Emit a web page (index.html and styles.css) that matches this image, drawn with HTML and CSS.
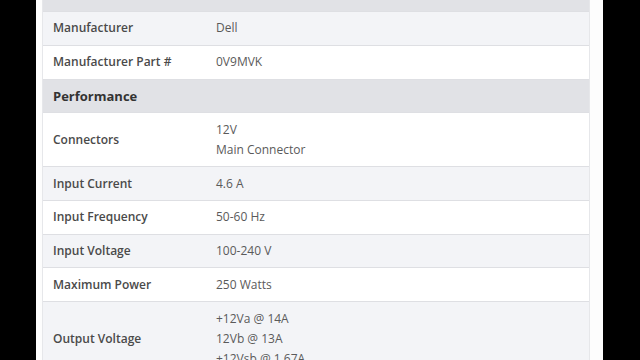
FILE: index.html
```html
<!DOCTYPE html>
<html>
<head>
<meta charset="utf-8">
<link rel="stylesheet" href="styles.css">
</head>
<body>
<div class="panel">
  <div class="specs">
    <div class="row section top"><div class="label">General</div></div>
    <div class="row alt"><div class="label">Manufacturer</div><div class="value">Dell</div></div>
    <div class="row"><div class="label">Manufacturer Part #</div><div class="value">0V9MVK</div></div>
    <div class="row section"><div class="label">Performance</div></div>
    <div class="row"><div class="label">Connectors</div><div class="value">12V<br>Main Connector</div></div>
    <div class="row alt"><div class="label">Input Current</div><div class="value">4.6 A</div></div>
    <div class="row"><div class="label">Input Frequency</div><div class="value">50-60 Hz</div></div>
    <div class="row alt"><div class="label">Input Voltage</div><div class="value">100-240 V</div></div>
    <div class="row"><div class="label">Maximum Power</div><div class="value">250 Watts</div></div>
    <div class="row alt"><div class="label">Output Voltage</div><div class="value">+12Va @ 14A<br>12Vb @ 13A<br>+12Vsb @ 1.67A</div></div>
  </div>
</div>
</body>
</html>
```

FILE: styles.css
```css
html, body {
  margin: 0;
  padding: 0;
  background: #000;
  height: 360px;
  overflow: hidden;
}
.panel {
  display: flow-root;
  margin-left: 36px;
  width: 567px;
  box-sizing: border-box;
  padding: 0 13px 0 6px;
  background: #fdfdfd;
  height: 360px;
  overflow: hidden;
}
.specs {
  margin-top: -21.8px;
  border-left: 1px solid #e6e7ea;
  border-right: 1px solid #e6e7ea;
  background: #fff;
  font-family: "Open Sans", "Noto Sans", sans-serif;
  font-size: 12px;
}
.row {
  display: grid;
  grid-template-columns: 163px 1fr;
  align-items: center;
  border-bottom: 1px solid #dedfe3;
  background: #fff;
}
.row.alt {
  background: #f3f4f7;
}
.row.section {
  background: #e1e2e6;
}
.label, .value {
  padding: 6.4px 10px;
  line-height: 20px;
}
.label {
  font-weight: 600;
  color: #4a4a4a;
}
.value {
  color: #5a5a5a;
}
.section .label {
  font-weight: 700;
  font-size: 13px;
  color: #333;
}
.top .label {
  color: #555;
}
```
